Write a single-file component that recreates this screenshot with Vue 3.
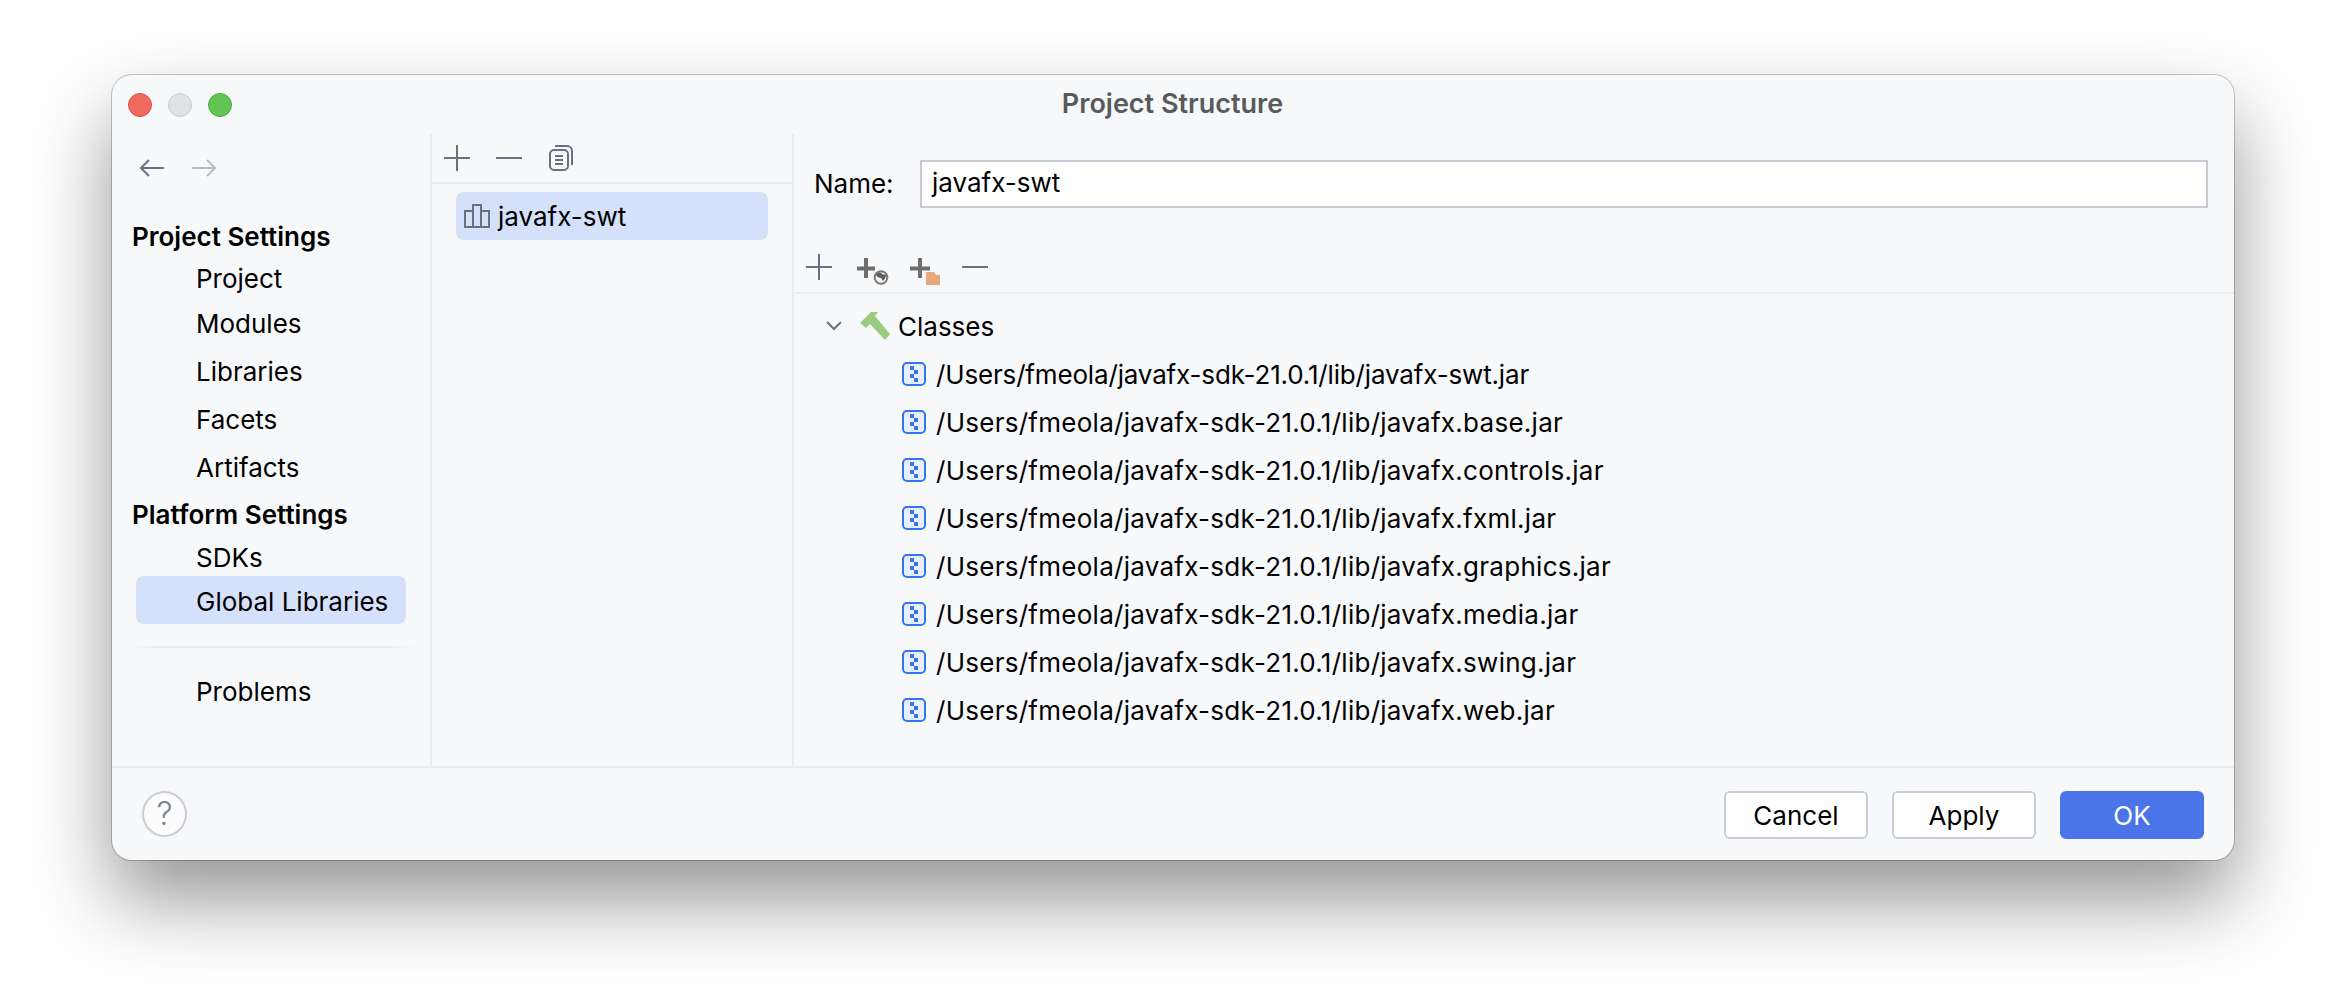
<script setup>
const groups = [
  { cls: "head first", label: "Project Settings" },
  { cls: "item short", label: "Project" },
  { cls: "item mid", label: "Modules" },
  { cls: "item", label: "Libraries" },
  { cls: "item", label: "Facets" },
  { cls: "item", label: "Artifacts" },
  { cls: "head", label: "Platform Settings" },
  { cls: "item tight", label: "SDKs" },
  { cls: "item selected", label: "Global Libraries" },
];

const jars = ["javafx-swt", "javafx.base", "javafx.controls", "javafx.fxml", "javafx.graphics", "javafx.media", "javafx.swing", "javafx.web"];
const jarPath = (name) => `/Users/fmeola/javafx-sdk-21.0.1/lib/${name}.jar`;
</script>

<template>
  <div class="page">
    <div class="window">
      <div class="titlebar">
        <div class="lights">
          <span class="light red"></span>
          <span class="light gray"></span>
          <span class="light green"></span>
        </div>
        <div class="title">Project Structure</div>
      </div>

      <div class="body">
        <aside class="sidebar">
          <div class="nav">
            <svg width="26" height="20" viewBox="0 0 26 20" fill="none" stroke="#6c707e" stroke-width="2"><path d="M25 10H2M10 2l-8 8 8 8" /></svg>
            <svg width="26" height="20" viewBox="0 0 26 20" fill="none" stroke="#b9bbc1" stroke-width="2"><path d="M1 10h23M16 2l8 8-8 8" /></svg>
          </div>
          <div v-for="g in groups" :key="g.label" :class="g.cls">{{ g.label }}</div>
          <div class="sep"></div>
          <div class="item">Problems</div>
        </aside>

        <section class="middle">
          <div class="toolbar">
            <span class="tool"><svg width="26" height="26" viewBox="0 0 26 26" stroke="#6c707e" stroke-width="2"><path d="M13 0v26M0 13h26" /></svg></span>
            <span class="tool"><svg width="26" height="26" viewBox="0 0 26 26" stroke="#6c707e" stroke-width="2"><path d="M0 13h26" /></svg></span>
            <span class="tool">
              <svg width="24" height="26" viewBox="0 0 24 26" fill="none" stroke="#6c707e" stroke-width="2">
                <rect x="1" y="5" width="18" height="20" rx="4" />
                <path d="M6 1h12a5 5 0 0 1 5 5v14" />
                <path d="M6 11h8M6 15h8M6 19h8" />
              </svg>
            </span>
          </div>
          <div class="lib-list">
            <div class="lib-row">
              <svg width="26" height="24" viewBox="0 0 26 24" fill="none" stroke="#6c707e" stroke-width="2">
                <path d="M1 7h8v16H1zM9 1h8v22H9zM17 7h8v16h-8z" />
              </svg>
              <span>javafx-swt</span>
            </div>
          </div>
        </section>

        <section class="detail">
          <div class="name-row">
            <label class="name-label">Name:</label>
            <div class="name-input">javafx-swt</div>
          </div>

          <div class="toolbar detail-bar">
            <span class="tool"><svg width="26" height="26" viewBox="0 0 26 26" stroke="#6c707e" stroke-width="2"><path d="M13 0v26M0 13h26" /></svg></span>
            <span class="tool">
              <svg class="badge-icon" width="36" height="36" viewBox="0 0 36 36" fill="none">
                <path d="M13 9v20M4 19.500h18" stroke="#6e6e6e" stroke-width="4" />
                <circle cx="28" cy="28.500" r="6.300" fill="#f7f8fa" stroke="#7a7a7a" stroke-width="2" />
                <path d="M23 26c2-3 5-3 6-1 1 1 3 0 4 1 0 3-2 5-3 6l-2-3c-2 0-4-1-5-3z" fill="#5f5f5f" />
              </svg>
            </span>
            <span class="tool">
              <svg class="badge-icon" width="36" height="36" viewBox="0 0 36 36" fill="none">
                <path d="M15 9v20M5 19.500h20" stroke="#6e6e6e" stroke-width="4" />
                <path d="M21 23h8l2 3h4v10H21z" fill="#e8a77e" />
              </svg>
            </span>
            <span class="tool"><svg width="26" height="26" viewBox="0 0 26 26" stroke="#6c707e" stroke-width="2"><path d="M0 13h26" /></svg></span>
          </div>

          <div class="tree">
            <div class="tree-root">
              <svg class="chevron" width="16" height="10" viewBox="0 0 16 10" fill="none" stroke="#6c707e" stroke-width="2"><path d="M1 1l7 7 7-7" /></svg>
              <svg class="hammer" width="30" height="28" viewBox="0 0 30 28"><path d="M0 11L11 0h7l-3 4 15 18-5 6-15-16-4 4z" fill="#9aca7f" /></svg>
              <span>Classes</span>
            </div>
            <div v-for="j in jars" :key="j" class="tree-row">
              <svg width="24" height="24" viewBox="0 0 24 24">
                <rect x="1" y="1" width="22" height="22" rx="4" fill="#e7effd" stroke="#3574f0" stroke-width="2" />
                <path d="M8 4h4v4H8zM12 8h4v4h-4zM8 12h4v4H8zM12 16h4v4h-4z" fill="#3574f0" />
              </svg>
              <span class="path" :class="{ dashed: j.includes('-') }">{{ jarPath(j) }}</span>
            </div>
          </div>
        </section>
      </div>

      <div class="footer">
        <div class="help">?</div>
        <div class="buttons">
          <button class="btn">Cancel</button>
          <button class="btn">Apply</button>
          <button class="btn primary">OK</button>
        </div>
      </div>
    </div>
  </div>
</template>

<style>
html, body {
  background: #fff;
  overflow: hidden;
}
</style>

<style scoped>
.page {
  height: 1008px;
  padding: 75px 0 0 112px;
  box-sizing: border-box;
  font-family: Inter, "Liberation Sans", sans-serif;
  font-size: 26px;
  color: #000;
}

.window {
  width: 2122px;
  height: 785px;
  background: #f7f8fa;
  border-radius: 20px;
  display: flex;
  flex-direction: column;
  box-shadow: 0 0 0 1px rgba(0, 0, 0, 0.22), 0 40px 80px rgba(0, 0, 0, 0.42);
}

/* title bar */
.titlebar {
  height: 59px;
  display: grid;
  grid-template-columns: 1fr auto 1fr;
  align-items: center;
  padding-left: 16px;
  flex: none;
}
.lights {
  display: flex;
  gap: 16px;
}
.light {
  width: 24px;
  height: 24px;
  border-radius: 50%;
  box-sizing: border-box;
  border: 1px solid;
}
.red { background: #ee6a5f; border-color: #d5544a; }
.gray { background: #e0e1e3; border-color: #c8c9cb; }
.green { background: #61c454; border-color: #4fa845; }
.title {
  font-weight: 600;
  font-size: 27px;
  color: #595a5d;
  margin: 0 0 3px -17px;
}

.body {
  flex: 1;
  display: flex;
  min-height: 0;
}

/* left nav */
.sidebar {
  width: 298px;
  padding-left: 20px;
  border-right: 2px solid #ebecf0;
  flex: none;
}
.nav {
  height: 68px;
  margin: 0 0 12px 7px;
  display: flex;
  align-items: center;
  gap: 26px;
}
.head {
  font-weight: 600;
  height: 46px;
  line-height: 48px;
}
.head.first { height: 44px; line-height: 46px; }
.item {
  height: 48px;
  line-height: 50px;
  margin: 0 24px 0 4px;
  padding-left: 60px;
  border-radius: 8px;
}
.item.short { height: 40px; line-height: 42px; }
.item.mid { height: 49px; line-height: 51px; }
.item.tight { height: 39px; line-height: 41px; }
.item.selected { background: #d5e1fb; line-height: 51px; }
.sep {
  height: 2px;
  margin: 22px 12px 19px -5px;
  background: linear-gradient(90deg, #f7f8fa, #ebecf0 12%, #ebecf0 88%, #f7f8fa);
}

/* library list */
.middle {
  width: 360px;
  border-right: 2px solid #ebecf0;
  flex: none;
}
.toolbar {
  height: 50px;
  box-sizing: border-box;
  border-bottom: 2px solid #ebecf0;
  padding: 0 0 1px 9px;
  display: flex;
  align-items: center;
  gap: 20px;
}
.tool {
  width: 32px;
  display: flex;
  justify-content: center;
}
.badge-icon {
  flex: none;
}
.lib-list {
  padding: 8px 24px 0 24px;
}
.lib-row {
  height: 48px;
  border-radius: 8px;
  background: #d5e1fb;
  display: flex;
  align-items: center;
  gap: 8px;
  padding-left: 8px;
}

/* right side */
.detail {
  flex: 1;
  min-width: 0;
}
.name-row {
  display: flex;
  align-items: center;
  padding: 26px 26px 0 20px;
}
.name-label {
  width: 106px;
  flex: none;
  padding-bottom: 2px;
}
.name-input {
  flex: 1;
  height: 48px;
  line-height: 42px;
  box-sizing: border-box;
  border: 2px solid #c9ccd6;
  background: #fff;
  padding-left: 10px;
}
.detail-bar {
  height: 53px;
  margin-top: 33px;
  padding-bottom: 0;
}
.tree {
  padding-top: 8px;
}
.tree-root {
  height: 48px;
  display: flex;
  align-items: center;
  padding-left: 32px;
}
.chevron { margin-right: 18px; }
.hammer { margin-right: 8px; }
.tree-row {
  height: 48px;
  display: flex;
  align-items: center;
  gap: 10px;
  padding-left: 108px;
}
.path {
  letter-spacing: 0.27px;
}
.path.dashed {
  letter-spacing: -0.16px;
}

/* footer */
.footer {
  height: 94px;
  box-sizing: border-box;
  border-top: 2px solid #ebecf0;
  display: flex;
  justify-content: space-between;
  align-items: flex-start;
  padding: 23px 30px 0 30px;
  flex: none;
}
.help {
  width: 45px;
  height: 46px;
  box-sizing: border-box;
  border: 2px solid #c9ccd6;
  border-radius: 50%;
  background: #fcfcfd;
  color: #7f8290;
  font-weight: 300;
  font-size: 32px;
  line-height: 42px;
  text-align: center;
}
.buttons {
  display: flex;
  gap: 24px;
}
.btn {
  width: 144px;
  height: 48px;
  box-sizing: border-box;
  border: 2px solid #c9ccd6;
  border-radius: 6px;
  background: #fff;
  font: inherit;
  color: #000;
  padding: 0;
}
.btn.primary {
  background: #4a75e8;
  border-color: #4a75e8;
  color: #fff;
}
</style>
